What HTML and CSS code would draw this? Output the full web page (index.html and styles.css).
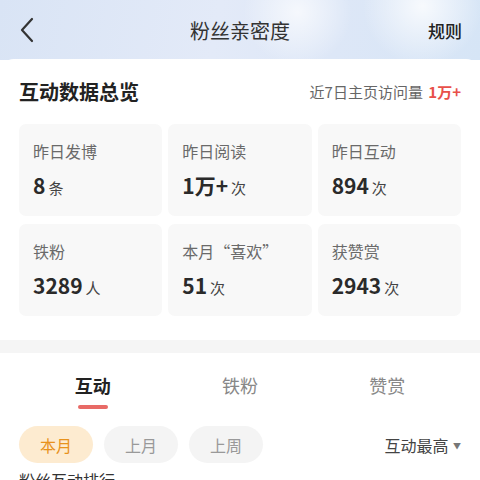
FILE: index.html
```html
<!DOCTYPE html>
<html lang="zh-CN">
<head>
    <meta charset="UTF-8">
    <meta name="viewport" content="width=device-width, initial-scale=1.0">
    <title>粉丝亲密度</title>
    <link rel="stylesheet" href="styles.css">
</head>
<body>
    <div class="header">
        <svg class="back" width="16" height="26" viewBox="0 0 16 26">
            <path d="M13 2 L3 13 L13 24" fill="none" stroke="#333" stroke-width="2.2" stroke-linecap="round" stroke-linejoin="round"/>
        </svg>
        <div class="title">粉丝亲密度</div>
        <div class="rule">规则</div>
    </div>

    <div class="card">
        <div class="card-head">
            <h2>互动数据总览</h2>
            <div class="visits">近7日主页访问量 <span class="hot">1万+</span></div>
        </div>
        <div class="stats">
            <div class="stat">
                <div class="label">昨日发博</div>
                <div class="value">8<span class="unit">条</span></div>
            </div>
            <div class="stat">
                <div class="label">昨日阅读</div>
                <div class="value">1万+<span class="unit">次</span></div>
            </div>
            <div class="stat">
                <div class="label">昨日互动</div>
                <div class="value">894<span class="unit">次</span></div>
            </div>
            <div class="stat">
                <div class="label">铁粉</div>
                <div class="value">3289<span class="unit">人</span></div>
            </div>
            <div class="stat">
                <div class="label">本月“喜欢”</div>
                <div class="value">51<span class="unit">次</span></div>
            </div>
            <div class="stat">
                <div class="label">获赞赏</div>
                <div class="value">2943<span class="unit">次</span></div>
            </div>
        </div>
    </div>

    <div class="divider"></div>

    <div class="panel">
        <div class="tabs">
            <div class="tab active">互动<span class="bar"></span></div>
            <div class="tab">铁粉</div>
            <div class="tab">赞赏</div>
        </div>
        <div class="filters">
            <div class="chip on">本月</div>
            <div class="chip">上月</div>
            <div class="chip">上周</div>
            <div class="sort">互动最高 <span class="arrow">▼</span></div>
        </div>
        <div class="list-title">粉丝互动排行</div>
    </div>
</body>
</html>
```

FILE: styles.css
```css
body {
    margin: 0;
    font-family: "Noto Sans CJK SC", "Noto Sans", sans-serif;
    color: #333;
    background: #fff;
    overflow: hidden;
}

.header {
    height: 60px;
    display: flex;
    align-items: center;
    justify-content: space-between;
    padding: 0 18px 0 19px;
    background:
        radial-gradient(circle at 62% 20%, rgba(255, 255, 255, 0.7), transparent 18%),
        radial-gradient(circle at 88% 10%, rgba(255, 255, 255, 0.8), transparent 14%),
        linear-gradient(100deg, #d9e4f5 0%, #e3eaf8 45%, #dde7f7 70%, #d6e5f6 100%);
    position: relative;
}

.back {
    display: block;
}

.title {
    position: absolute;
    left: 0;
    right: 0;
    text-align: center;
    font-size: 20px;
    color: #333;
    pointer-events: none;
}

.rule {
    font-size: 17px;
    font-weight: 500;
    color: #222;
}

.card {
    background: #fff;
    border-radius: 14px 14px 0 0;
    margin-top: -1px;
    padding: 19px 19px 24px;
    position: relative;
}

.card-head {
    display: flex;
    justify-content: space-between;
    align-items: center;
    height: 26px;
    margin-bottom: 20px;
}

.card-head h2 {
    margin: 0;
    font-size: 20px;
    font-weight: 700;
    color: #222;
}

.visits {
    font-size: 15px;
    color: #666;
}

.hot {
    color: #e8504a;
    font-weight: 700;
    margin-left: 2px;
}

.stats {
    display: grid;
    grid-template-columns: repeat(3, 1fr);
    gap: 8px 6px;
}

.stat {
    height: 92px;
    box-sizing: border-box;
    background: #f8f8f8;
    border-radius: 7px;
    padding: 16px 14px 0;
}

.label {
    font-size: 16px;
    line-height: 22px;
    color: #6a6a6a;
}

.value {
    margin-top: 9px;
    font-size: 21px;
    line-height: 28px;
    font-weight: 700;
    color: #2a2a2a;
}

.unit {
    font-size: 15px;
    font-weight: 400;
    color: #444;
    margin-left: 3px;
}

.divider {
    height: 13px;
    background: #f5f5f5;
}

.panel {
    padding: 0 19px;
}

.tabs {
    display: flex;
    padding-top: 19px;
}

.tab {
    flex: 1;
    display: flex;
    flex-direction: column;
    align-items: center;
    font-size: 18px;
    line-height: 26px;
    color: #888;
    height: 37px;
}

.tab.active {
    color: #222;
    font-weight: 700;
}

.bar {
    display: block;
    width: 30px;
    height: 4px;
    border-radius: 2px;
    background: #e86a66;
    margin-top: 7px;
}

.filters {
    display: flex;
    align-items: center;
    gap: 11px;
    margin-top: 17px;
}

.chip {
    width: 74px;
    height: 37px;
    border-radius: 19px;
    background: #f4f4f4;
    color: #999;
    font-size: 16px;
    display: flex;
    align-items: center;
    justify-content: center;
}

.chip.on {
    background: #fdebd0;
    color: #e8921c;
}

.sort {
    margin-left: auto;
    font-size: 16px;
    color: #444;
}

.arrow {
    font-size: 8px;
    color: #777;
    vertical-align: 3px;
    margin-left: 1px;
}

.list-title {
    margin-top: 6px;
    font-size: 16px;
    line-height: 22px;
    color: #333;
}
```
